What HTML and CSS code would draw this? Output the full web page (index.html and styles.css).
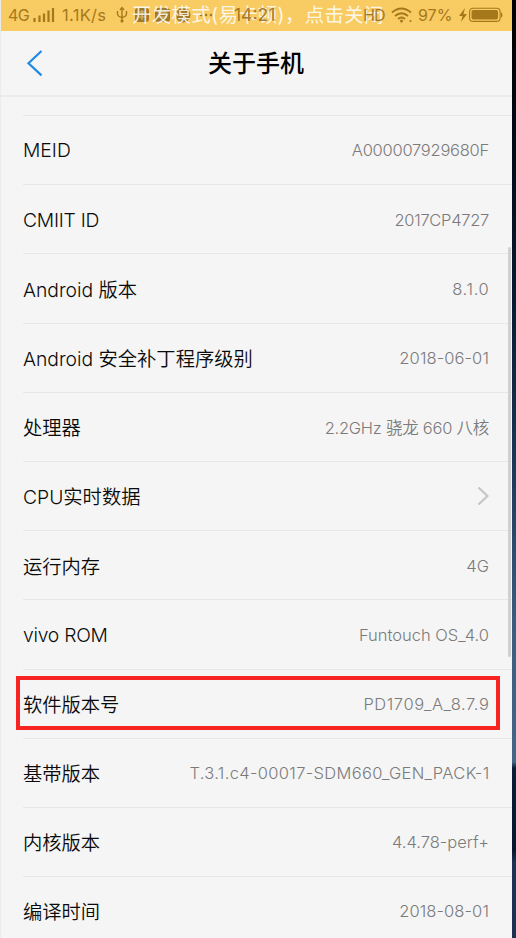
FILE: index.html
```html
<!DOCTYPE html>
<html lang="zh-CN">
<head>
<meta charset="utf-8">
<title>关于手机</title>
<link rel="stylesheet" href="styles.css">
</head>
<body>
<div class="phone">
  <div class="status">
    <span class="net">4G</span>
    <svg class="signal" width="22" height="16" viewBox="0 0 22 16"><path d="M1.5 11V15M6.500 8.500V15M11 6.500V15M15.500 3.500V15M20 1V15" /></svg>
    <span class="speed">1.1K/s</span>
    <svg class="tray" width="96" height="18" viewBox="0 0 96 18">
      <g fill="none" stroke="#a5791b" stroke-width="1.4"><path d="M6 2V15M1.500 5V8Q2 11 6 11.500Q10 11 10.500 8V5"/><path d="M4 4L6 1.500L8 4"/></g>
      <circle cx="6" cy="15" r="1.600" fill="#a5791b"/>
      <g fill="#a07a2a"><rect x="19" y="2" width="14" height="14" rx="3"/><rect x="39" y="2" width="15" height="14" rx="3"/><circle cx="67" cy="9" r="7.500"/><circle cx="85" cy="9" r="1.300"/><circle cx="90" cy="9" r="1.300"/><circle cx="95" cy="9" r="1.300"/></g>
      <g fill="none" stroke="#e0bd68" stroke-width="1.100"><path d="M22 6H30M22 11H30M26 4V14M42 6H51M42 11H51M64 7L70 12"/></g>
    </svg>
    <span class="clock">14:21</span>
    <span class="hd">HD</span>
    <svg class="wifi" width="22" height="16" viewBox="0 0 22 16"><g fill="none" stroke="#a5791b" stroke-width="1.800"><path d="M1 5.500Q10.500 -2.500 20 5.500M4 9Q10.500 3.500 17 9M7 12Q10.500 9 14 12"/></g><circle cx="10.500" cy="14" r="1.500" fill="#a5791b"/><circle cx="19.500" cy="14" r="1" fill="#a5791b"/></svg>
    <span class="percent">97%</span>
    <svg class="battery" width="46" height="16" viewBox="0 0 46 16"><path d="M7 1L1 9H4.500L3 15L9 7H5.500Z" fill="#a5791b"/><rect x="11.600" y="1.200" width="30.500" height="13.200" rx="3.500" fill="none" stroke="#a5791b" stroke-width="1.100"/><rect x="13.500" y="3" width="26.500" height="9.600" rx="1.800" fill="#a5791b"/><path d="M43 5Q46 8 43 11Z" fill="#a5791b"/></svg>
    <div class="notice">开发模式(易卡顿)，点击关闭</div>
  </div>
  <header class="header">
    <svg class="back" width="18" height="28" viewBox="0 0 18 28"><path d="M15.500 2L2.500 14.200L15.500 26.400"/></svg>
    <h1>关于手机</h1>
  </header>
  <main class="list">
    <div class="row"><span class="label">MEID</span><span class="value snug">A000007929680F</span></div>
    <div class="row"><span class="label condensed">CMIIT ID</span><span class="value snugger">2017CP4727</span></div>
    <div class="row"><span class="label">Android 版本</span><span class="value wider">8.1.0</span></div>
    <div class="row"><span class="label">Android 安全补丁程序级别</span><span class="value loose">2018-06-01</span></div>
    <div class="row"><span class="label">处理器</span><span class="value snug">2.2GHz 骁龙 660 八核</span></div>
    <div class="row"><span class="label">CPU实时数据</span><svg class="more" width="12" height="20" viewBox="0 0 12 20"><path d="M1.500 1.500L10.500 10L1.500 18.500"/></svg></div>
    <div class="row"><span class="label">运行内存</span><span class="value">4G</span></div>
    <div class="row"><span class="label condensed">vivo ROM</span><span class="value">Funtouch OS_4.0</span></div>
    <div class="row marked"><span class="label">软件版本号</span><span class="value wide">PD1709_A_8.7.9</span></div>
    <div class="row"><span class="label">基带版本</span><span class="value roomy">T.3.1.c4-00017-SDM660_GEN_PACK-1</span></div>
    <div class="row"><span class="label">内核版本</span><span class="value">4.4.78-perf+</span></div>
    <div class="row"><span class="label">编译时间</span><span class="value loose">2018-08-01</span></div>
  </main>
  <div class="scrollbar"></div>
</div>
</body>
</html>
```

FILE: styles.css
```css
*, *::after { box-sizing: border-box; }
body {
  margin: 0;
  height: 938px;
  overflow: hidden;
  background: linear-gradient(#000 0, #020a18 150px, #071a32 300px, #1b3657 460px, #3b5c80 620px, #466587 762px, #0c1c38 768px, #071630 850px, #1c3355 862px, #1b3153 938px);
  font-family: Inter, "Noto Sans CJK SC", sans-serif;
}
.phone {
  position: relative;
  width: 512px;
  height: 938px;
  overflow: hidden;
  background: #f5f5f5;
  border-left: 1px solid #ebebeb;
}
.status {
  position: relative;
  display: flex;
  align-items: center;
  height: 31px;
  margin-left: -1px;
  padding: 0 0 2px 8px;
  background: #f8cb63;
  color: #a5791b;
  font-size: 16px;
  white-space: nowrap;
}
.status > * { flex: none; }
.net { width: 25px; letter-spacing: -0.7px; }
.signal { fill: none; stroke: #a5791b; stroke-width: 2.2; }
.speed { width: 46px; margin-left: 7px; font-size: 16.5px; letter-spacing: 0.3px; }
.tray { margin-left: 8px; }
.clock, .hd {
  position: relative;
  z-index: 1;
  color: rgba(140, 98, 18, .8);
}
.clock { width: 46px; margin-left: 22px; font-size: 17.5px; }
.hd { width: 23px; margin-left: 83px; letter-spacing: -1px; }
.wifi { margin-left: 5px; }
.percent { width: 35px; margin-left: 5px; }
.battery { margin-left: 5px; }
.notice {
  position: absolute;
  left: 132px;
  top: 1px;
  font-size: 19.4px;
  letter-spacing: 0.35px;
  line-height: 28px;
  color: rgba(255, 255, 255, .85);
}
.header {
  display: flex;
  align-items: center;
  height: 66px;
  padding-left: 25px;
  border-bottom: 2px solid #ececec;
}
.back { fill: none; stroke: #2089e5; stroke-width: 2.2; }
h1 {
  margin: 2px 0 0 164px;
  font-size: 24px;
  font-weight: 500;
  line-height: 34px;
  color: #000;
}
.list { padding: 18px 0 0 22px; }
.row {
  position: relative;
  display: flex;
  align-items: center;
  justify-content: space-between;
  height: 69.2px;
  padding: 0.6px 23px 0 0;
  border-top: 1px solid #e8e8e8;
  white-space: nowrap;
}
.label { font-size: 19.3px; font-weight: 360; color: #0b0b0b; }
.condensed { letter-spacing: -0.25px; }
.value { font-size: 16.5px; font-weight: 350; color: #7b7b7b; }
.snug { letter-spacing: -0.25px; }
.snugger { letter-spacing: -0.28px; }
.loose { letter-spacing: 0.1px; }
.roomy { letter-spacing: 0.33px; }
.wide { letter-spacing: 0.58px; }
.wider { letter-spacing: 0.7px; }
.roomy, .wide, .wider { margin-right: -0.5px; }
.more { fill: none; stroke: #c5c5c5; stroke-width: 2.2; }
.marked::after {
  content: "";
  position: absolute;
  left: -7px;
  top: 6px;
  width: 484px;
  height: 54px;
  border: 4px solid #f72424;
}
.scrollbar {
  position: absolute;
  right: 1px;
  top: 247px;
  width: 3px;
  height: 410px;
  background: #d0d0d0;
  border-radius: 2px;
}
```
